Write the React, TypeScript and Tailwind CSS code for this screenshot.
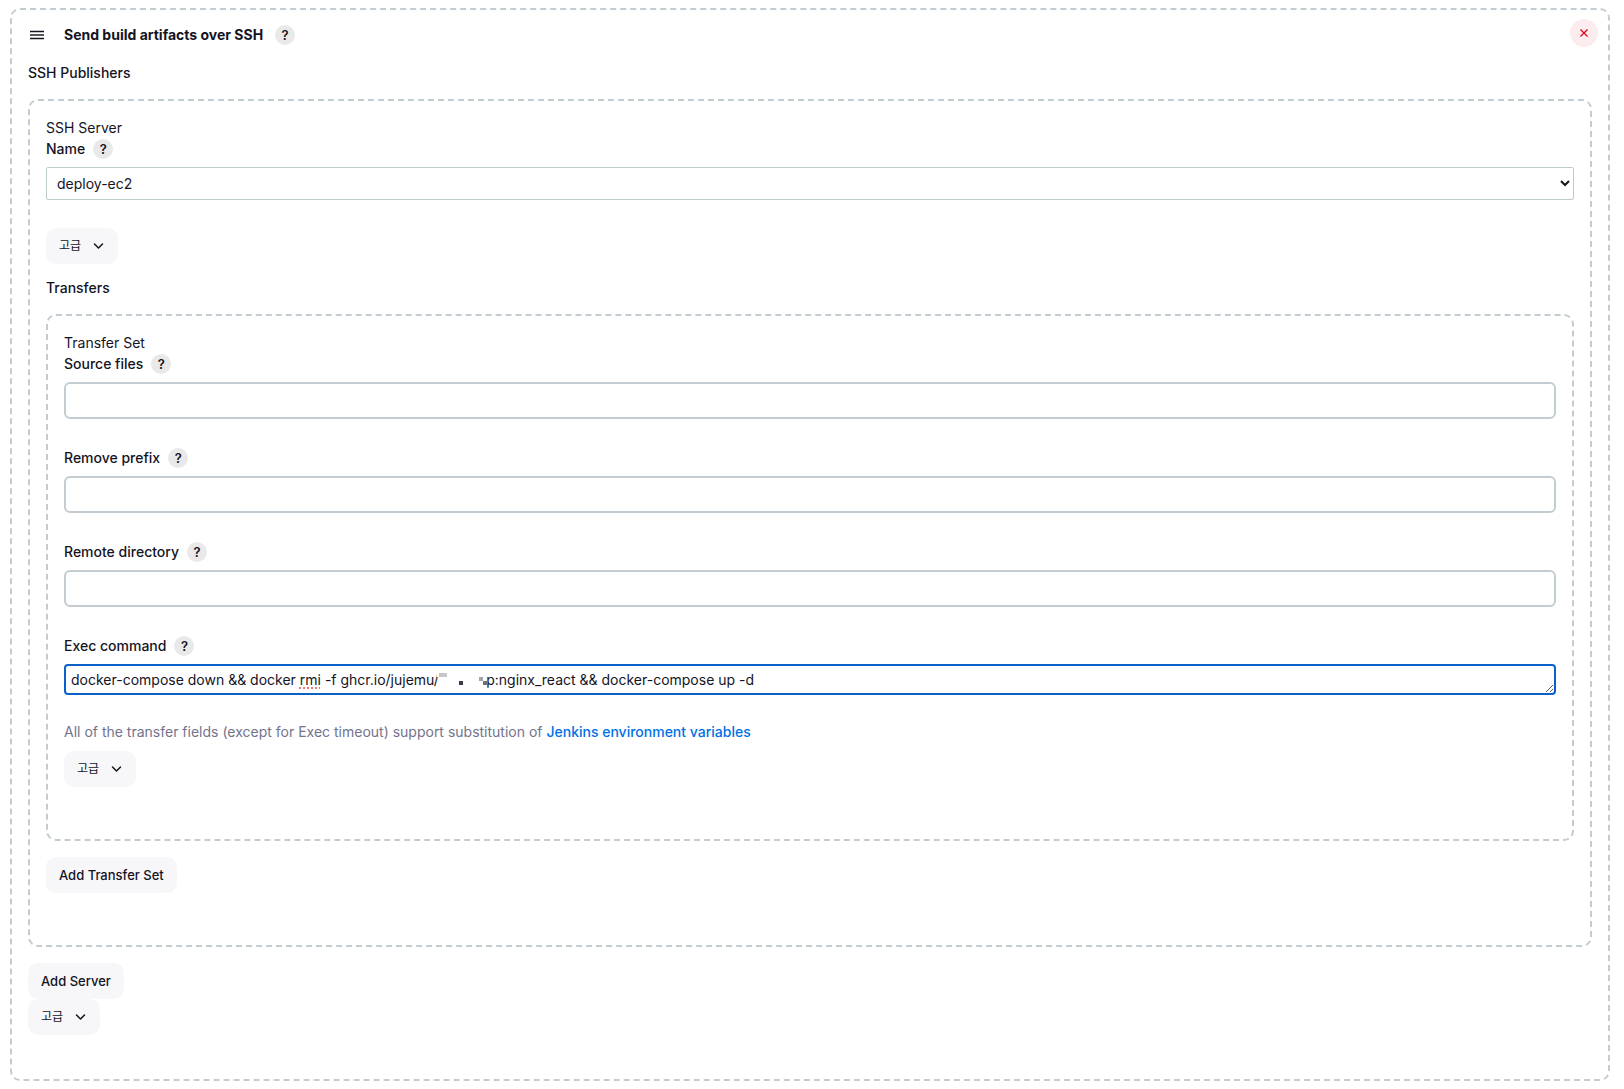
import type { ReactNode } from 'react'

const MASK_GAP = '\u00a0'.repeat(12)
const COMMAND_START = 'docker-compose down && docker '
const COMMAND_MIDDLE = ' -f ghcr.io/jujemu/'
const COMMAND_END = 'p:nginx_react && docker-compose up -d'

const TRANSFER_FIELDS = [
  { id: 'source-files', label: 'Source files' },
  { id: 'remove-prefix', label: 'Remove prefix' },
  { id: 'remote-directory', label: 'Remote directory' },
]

function HelpButton({ topic }: { topic: string }) {
  return (
    <button
      type="button"
      aria-label={`Help for ${topic}`}
      className="flex size-5 shrink-0 items-center justify-center rounded-full bg-[#e9e9e9] text-[13px] leading-5 font-semibold"
    >
      ?
    </button>
  )
}

function FieldLabel({ htmlFor, children }: { htmlFor: string; children: string }) {
  return (
    <div className="flex h-5 items-center gap-2">
      <label htmlFor={htmlFor} className="font-medium">
        {children}
      </label>
      <HelpButton topic={children} />
    </div>
  )
}

function DashedBox({ className, children }: { className: string; children: ReactNode }) {
  return (
    <div className={`rounded-[10px] border-2 border-dashed border-[#c3ccd1] px-4 ${className}`}>
      {children}
    </div>
  )
}

function ActionButton({ children }: { children: ReactNode }) {
  return (
    <button
      type="button"
      className="flex h-9 items-center rounded-[10px] bg-[#f7f7f9] px-[13px] text-[13px] leading-5 font-medium"
    >
      {children}
    </button>
  )
}

function AdvancedButton() {
  return (
    <ActionButton>
      <span className="text-xs leading-5 font-normal">고급</span>
      <svg className="mr-px ml-3 h-3 w-[11px]" viewBox="0 0 11 12" fill="none" aria-hidden="true">
        <path
          d="M1.5 4 5.5 8l4-4"
          stroke="currentColor"
          strokeWidth="1.5"
          strokeLinecap="round"
          strokeLinejoin="round"
        />
      </svg>
    </ActionButton>
  )
}

function ExecCommand() {
  return (
    <div className="relative mt-2 text-sm leading-5">
      <textarea
        id="exec-command"
        rows={1}
        spellCheck={false}
        defaultValue={`${COMMAND_START}rmi${COMMAND_MIDDLE}${MASK_GAP}${COMMAND_END}`}
        className="block h-[31px] w-full resize-y overflow-hidden rounded-[4px] border-2 border-[#0b60c9] bg-white px-[5px] py-1 outline-none"
      />
      {/* spelling mark and the leftovers of the masked image name */}
      <div
        aria-hidden="true"
        className="pointer-events-none absolute inset-0 overflow-hidden px-[7px] py-[6px] whitespace-pre text-transparent"
      >
        {COMMAND_START}
        <span className="underline decoration-[#f4736f] decoration-dotted decoration-2 underline-offset-2">
          rmi
        </span>
        {COMMAND_MIDDLE}
        <svg className="inline-block h-5 w-12 overflow-visible align-top" viewBox="0 0 48 20">
          <path d="M-2 0h4v7h-4z" fill="#fff" />
          <path d="M0 3h8v4H0z" fill="#c6c6c8" />
          <path d="M20 11h4v4h-4z" fill="#3b3b48" />
          <path d="M40 7h4v4h-4z" fill="#a5a5aa" />
          <path d="M44 11h5v4h-5z" fill="#71717a" />
        </svg>
      </div>
    </div>
  )
}

export default function App() {
  return (
    <main className="bg-white px-[10px] py-2 font-[Inter,'Noto_Sans_CJK_KR',sans-serif] text-sm leading-5 text-[#14141f]">
      <div className="pr-1">
        <DashedBox className="pb-11">
          <header className="flex items-start pt-[9px]">
            <div className="flex flex-1 items-center pt-[6px]">
              <svg className="mx-[2px] h-[10px] w-[14px]" viewBox="0 0 14 10" aria-hidden="true">
                <path d="M0 1.5h14M0 8.5h14" stroke="currentColor" strokeWidth="1.3" />
                <path d="M0 5h14" stroke="currentColor" strokeOpacity=".8" strokeWidth="1.8" />
              </svg>
              <h1 className="ml-[18px] font-bold">Send build artifacts over SSH</h1>
              <div className="ml-3">
                <HelpButton topic="Send build artifacts over SSH" />
              </div>
            </div>
            <button
              type="button"
              aria-label="Remove"
              className="-mr-[6px] flex size-7 items-center justify-center rounded-full bg-[#fdecee] text-[#e6001f]"
            >
              <svg className="size-2" viewBox="0 0 8 8" aria-hidden="true">
                <path d="M.5.5l7 7M7.5.5l-7 7" stroke="currentColor" strokeWidth="1.3" />
              </svg>
            </button>
          </header>

          <h2 className="mt-4 font-medium">SSH Publishers</h2>

          <DashedBox className="mt-4 pt-[17px] pb-[52px]">
            <div className="mb-px">SSH Server</div>
            <FieldLabel htmlFor="server-name">Name</FieldLabel>
            <select
              id="server-name"
              className="mt-2 block h-[33px] w-full rounded-[2px] border border-[#bfcacc] bg-white pl-[6px]"
            >
              <option>deploy-ec2</option>
            </select>
            <div className="mt-7">
              <AdvancedButton />
            </div>

            <h3 className="mt-[14px] font-medium">Transfers</h3>

            <DashedBox className="mt-4 pt-[17px] pb-[52px]">
              <div className="mb-px">Transfer Set</div>
              <div className="flex flex-col gap-[29px]">
                {TRANSFER_FIELDS.map(field => (
                  <div key={field.id}>
                    <FieldLabel htmlFor={field.id}>{field.label}</FieldLabel>
                    <input
                      id={field.id}
                      type="text"
                      className="mt-2 block h-[37px] w-full rounded-md border-2 border-[#c3ccd1] bg-white px-2 outline-none"
                    />
                  </div>
                ))}
                <div>
                  <FieldLabel htmlFor="exec-command">Exec command</FieldLabel>
                  <ExecCommand />
                </div>
              </div>
              <p className="mt-[27px] mb-[9px] text-[#73738c]">
                All of the transfer fields (except for Exec timeout) support substitution of{' '}
                <a href="#environment-variables" className="font-medium text-[#0070e6]">
                  Jenkins environment variables
                </a>
              </p>
              <AdvancedButton />
            </DashedBox>

            <div className="mt-4">
              <ActionButton>Add Transfer Set</ActionButton>
            </div>
          </DashedBox>

          <div className="mt-4">
            <ActionButton>Add Server</ActionButton>
            <AdvancedButton />
          </div>
        </DashedBox>
      </div>
    </main>
  )
}
